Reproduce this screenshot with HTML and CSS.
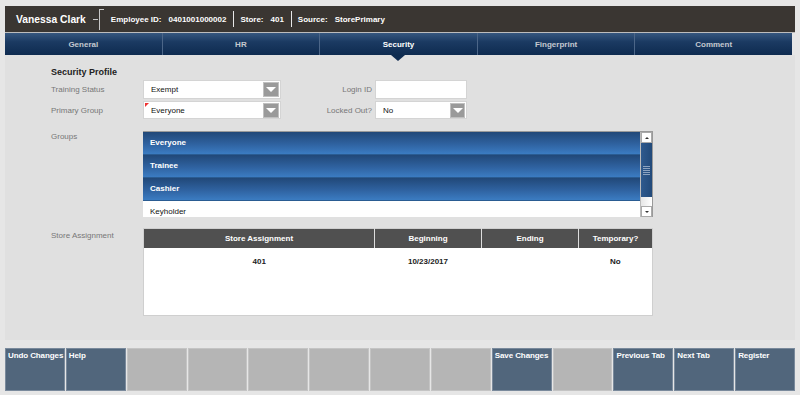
FILE: index.html
```html
<!DOCTYPE html>
<html lang="en">
<head>
    <meta charset="UTF-8">
    <title>Employee - Security</title>
    <link rel="stylesheet" href="styles.css">
</head>
<body>
    <div class="app">
        <div class="header">
            <span class="emp-name">Vanessa Clark</span>
            <svg class="bracket" width="12" height="24" viewBox="0 0 12 24">
                <path d="M0 12.5H5M6.5 2V23M6.5 2.5H11" stroke="#c8c8c8" stroke-width="1" fill="none"/>
            </svg>
            <span class="hd-item"><b>Employee ID:</b><b>0401001000002</b></span>
            <span class="hd-sep"></span>
            <span class="hd-item"><b>Store:</b><b>401</b></span>
            <span class="hd-sep"></span>
            <span class="hd-item"><b>Source:</b><b>StorePrimary</b></span>
        </div>
        <div class="tabs">
            <div class="tab">General</div>
            <div class="tab">HR</div>
            <div class="tab active">Security</div>
            <div class="tab">Fingerprint</div>
            <div class="tab">Comment</div>
        </div>

        <div class="main">
            <div class="section-title">Security Profile</div>
            <div class="profile">
                <label class="lbl">Training Status</label>
                <div class="select"><span>Exempt</span><i class="arrow"></i></div>
                <label class="lbl right">Login ID</label>
                <div class="input"></div>

                <label class="lbl">Primary Group</label>
                <div class="select required"><span>Everyone</span><i class="arrow"></i></div>
                <label class="lbl right">Locked Out?</label>
                <div class="select"><span>No</span><i class="arrow"></i></div>
            </div>

            <div class="row groups-row">
                <label class="lbl">Groups</label>
                <div class="listbox">
                    <div class="items">
                        <div class="item sel">Everyone</div>
                        <div class="item sel">Trainee</div>
                        <div class="item sel">Cashier</div>
                        <div class="item">Keyholder</div>
                    </div>
                    <div class="scrollbar">
                        <div class="sb-btn up"></div>
                        <div class="sb-thumb"><span></span></div>
                        <div class="sb-track"></div>
                        <div class="sb-btn down"></div>
                    </div>
                </div>
            </div>

            <div class="row store-row">
                <label class="lbl">Store Assignment</label>
                <table class="grid">
                    <thead>
                        <tr>
                            <th class="c1">Store Assignment</th>
                            <th class="c2">Beginning</th>
                            <th class="c3">Ending</th>
                            <th class="c4">Temporary?</th>
                        </tr>
                    </thead>
                    <tbody>
                        <tr>
                            <td>401</td>
                            <td>10/23/2017</td>
                            <td></td>
                            <td>No</td>
                        </tr>
                    </tbody>
                </table>
            </div>
        </div>

        <div class="footer">
            <div class="btn on">Undo Changes</div>
            <div class="btn on">Help</div>
            <div class="btn"></div>
            <div class="btn"></div>
            <div class="btn"></div>
            <div class="btn"></div>
            <div class="btn"></div>
            <div class="btn"></div>
            <div class="btn on">Save Changes</div>
            <div class="btn"></div>
            <div class="btn on">Previous Tab</div>
            <div class="btn on">Next Tab</div>
            <div class="btn on">Register</div>
        </div>
    </div>
</body>
</html>
```
FILE: styles.css
```css
html, body {
    margin: 0;
    padding: 0;
}
body {
    background: #e6e6e6;
    font-family: "Liberation Sans", Arial, sans-serif;
    font-size: 8px;
    color: #222;
}
.app {
    padding: 6px 5px 0 5px;
    width: 790px;
}

/* header bar */
.header {
    height: 26px;
    background: #3a3632;
    border-bottom: 1px solid #bdbdbd;
    display: flex;
    align-items: center;
    padding-left: 11px;
    color: #fff;
}
.emp-name {
    font-size: 10.3px;
    font-weight: bold;
    margin-right: 7px;
}
.bracket { margin-right: 6px; }
.hd-item b {
    font-size: 8px;
    margin-right: 7px;
}
.hd-sep {
    width: 1px;
    height: 16px;
    background: #e8e8e8;
    margin: 0 6px 0 0;
}

/* tabs */
.tabs {
    display: flex;
    width: 787px;
    height: 22px;
}
.tab {
    flex: 1;
    position: relative;
    display: flex;
    align-items: center;
    justify-content: center;
    color: #c4c8d0;
    font-weight: bold;
    background: linear-gradient(#36577f 0%, #1b3a62 40%, #0e2b50 100%);
    border-left: 1px solid #4c6688;
}
.tab:first-child { border-left: none; }
.tab.active { color: #fff; }
.tab.active::after {
    content: "";
    position: absolute;
    left: 50%;
    bottom: -6px;
    margin-left: -7px;
    border-left: 7px solid transparent;
    border-right: 7px solid transparent;
    border-top: 6px solid #0e2b50;
}

/* main content */
.main {
    background: #e0e0e0;
    height: 285px;
    padding: 12px 0 0 46px;
    box-sizing: border-box;
}
.section-title {
    font-size: 9px;
    font-weight: bold;
    color: #222;
    margin-bottom: 3px;
}
.lbl {
    color: #777;
    font-size: 8px;
}
.lbl.right { text-align: right; padding-right: 3px; }
.profile {
    display: grid;
    grid-template-columns: 92px 138px 94px 92px;
    grid-template-rows: 19px 18px;
    row-gap: 2px;
    align-items: center;
}
.select, .input {
    height: 100%;
    background: #fff;
    border: 1px solid #d4d4d4;
    box-sizing: border-box;
    display: flex;
    align-items: center;
    position: relative;
}
.select span {
    flex: 1;
    padding-left: 7px;
    color: #111;
}
.select.required::before {
    content: "";
    position: absolute;
    left: 1px;
    top: 1px;
    border-top: 4px solid #e33;
    border-right: 4px solid transparent;
}
.arrow {
    width: 16px;
    height: 15px;
    margin-right: 1px;
    background: #9a9a9a;
    border: 1px solid #c0c0c0;
    box-sizing: border-box;
    display: flex;
    align-items: center;
    justify-content: center;
}
.arrow::after {
    content: "";
    border-left: 5px solid transparent;
    border-right: 5px solid transparent;
    border-top: 5px solid #fff;
}
.select:last-child .arrow { width: 15px; }

.row {
    display: flex;
}
.row > .lbl { width: 92px; flex: none; }
.groups-row { margin-top: 12px; }
.groups-row .lbl { padding-top: 1px; }

/* list box */
.listbox {
    width: 510px;
    height: 86px;
    display: flex;
    border-top: 1px solid #9a9a9a;
    background: #fff;
    box-sizing: border-box;
}
.items {
    flex: 1;
    overflow: hidden;
}
.item {
    height: 22px;
    line-height: 22px;
    padding-left: 7px;
    font-size: 8px;
    color: #111;
    border-bottom: 1px solid #d8d8d8;
}
.item.sel {
    color: #fff;
    font-weight: bold;
    background: linear-gradient(#214878, #2f62a0 55%, #3b7cc2);
    border-bottom: 1px solid #2a5c92;
}
.scrollbar {
    width: 11px;
    display: flex;
    flex-direction: column;
    border-left: 1px solid #bbb;
    border-right: 1px solid #999;
}
.sb-btn {
    height: 9px;
    background: #fff;
    border: 1px solid #aaa;
    display: flex;
    align-items: center;
    justify-content: center;
}
.sb-btn.up::after {
    content: "";
    border-left: 2px solid transparent;
    border-right: 2px solid transparent;
    border-bottom: 2px solid #333;
}
.sb-btn.down::after {
    content: "";
    border-left: 2px solid transparent;
    border-right: 2px solid transparent;
    border-top: 2px solid #333;
}
.sb-thumb {
    height: 54px;
    background: linear-gradient(90deg, #2f5a8e, #224a7a);
    display: flex;
    align-items: center;
    justify-content: center;
}
.sb-thumb span {
    width: 7px;
    height: 9px;
    background: repeating-linear-gradient(#8ca3c0 0 1px, transparent 1px 2px);
}
.sb-track {
    flex: 1;
    background: linear-gradient(90deg, #e6e6e6, #fff);
}

/* store table */
.store-row { margin-top: 11px; }
.store-row .lbl { padding-top: 3px; }
.grid {
    width: 510px;
    border-collapse: collapse;
    background: #fff;
    border: 1px solid #cfcfcf;
    font-size: 8px;
}
.grid th {
    height: 19px;
    background: #505050;
    color: #fff;
    font-weight: bold;
    border-left: 1px solid #ddd;
    padding: 0;
}
.grid th:first-child { border-left: none; }
.grid .c1 { width: 230px; }
.grid .c2 { width: 106px; }
.grid .c3 { width: 96px; }
.grid td {
    height: 67px;
    vertical-align: top;
    text-align: center;
    font-weight: bold;
    color: #222;
    padding: 9px 0 0 0;
    box-sizing: border-box;
}

/* footer buttons */
.footer {
    margin-top: 8px;
    display: grid;
    grid-template-columns: repeat(13, 1fr);
    gap: 1px;
    height: 43px;
    width: 790px;
}
.btn {
    background: #b5b5b5;
    border: 1px solid #c4c4c4;
    color: #fff;
    font-weight: bold;
    padding: 2px 2px;
    font-size: 8px;
    letter-spacing: -0.1px;
    white-space: nowrap;
    overflow: hidden;
}
.btn.on {
    background: #51667c;
    border-color: #7a8a9c;
}
```
